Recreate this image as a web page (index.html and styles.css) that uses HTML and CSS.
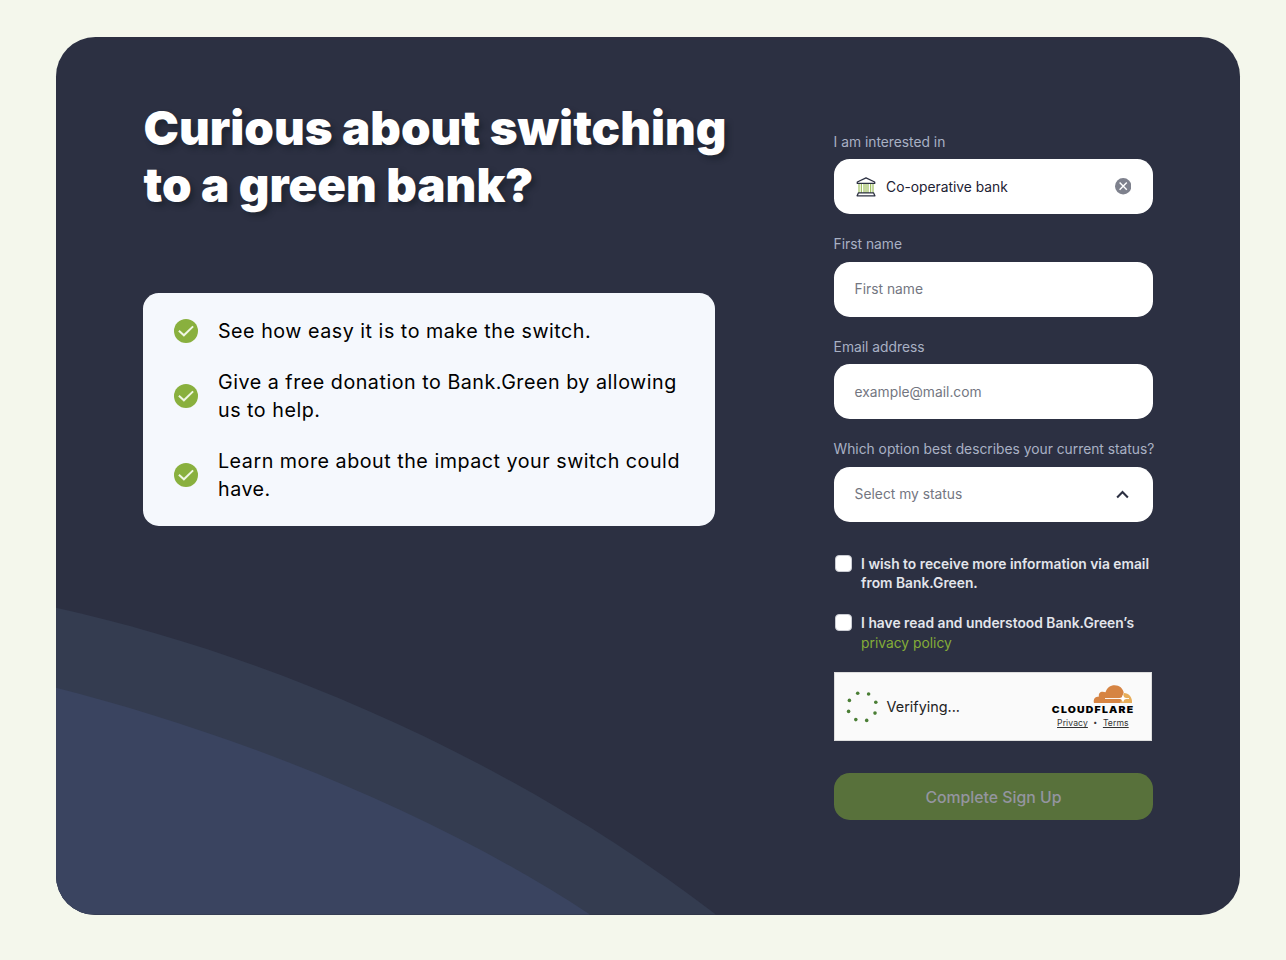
FILE: index.html
```html
<!DOCTYPE html>
<html lang="en">
<head>
<meta charset="utf-8">
<title>Bank.Green – Switch</title>
<link rel="stylesheet" href="styles.css">
</head>
<body>
<main class="panel">
  <svg class="waves" viewBox="0 0 1184 878" preserveAspectRatio="none" aria-hidden="true">
    <path fill="#343c50" d="M0 571C230 622 470 732 660 878H0Z"/>
    <path fill="#3a4460" d="M0 651C170 694 375 773 534 878H0Z"/>
  </svg>
  <section class="intro">
    <h1 class="title">Curious about switching<br>to a green bank?</h1>
    <ul class="benefits">
      <li class="benefit"><svg class="tick" viewBox="0 0 24 24"><circle cx="12" cy="12" r="12" fill="#89b03e"/><path d="M4.9 11.7l5 4.6 9.2-8.9" fill="none" stroke="#f0f7e4" stroke-width="2"/></svg><span class="copy">See how easy it is to make the switch.</span></li>
      <li class="benefit"><svg class="tick" viewBox="0 0 24 24"><circle cx="12" cy="12" r="12" fill="#89b03e"/><path d="M4.9 11.7l5 4.6 9.2-8.9" fill="none" stroke="#f0f7e4" stroke-width="2"/></svg><span class="copy">Give a free donation to Bank.Green by allowing<br>us to help.</span></li>
      <li class="benefit"><svg class="tick" viewBox="0 0 24 24"><circle cx="12" cy="12" r="12" fill="#89b03e"/><path d="M4.9 11.7l5 4.6 9.2-8.9" fill="none" stroke="#f0f7e4" stroke-width="2"/></svg><span class="copy">Learn more about the impact your switch could<br>have.</span></li>
    </ul>
  </section>
  <form class="form">
    <div class="field">
      <label class="label">I am interested in</label>
      <div class="control chosen">
        <svg class="bank" viewBox="0 0 20 20" fill="none" stroke="#2c3042" stroke-width="1.3" stroke-linejoin="round">
          <path stroke="#89b03e" stroke-width="1" d="M3 7v9M5.3 7v9M8 7v9M10 7v9M12 7v9M14.7 7v9M17 7v9"/>
          <path d="M1.3 5 10 .9 18.7 5v1.4H1.3ZM2.5 15.8h15L18.9 18.8H1.1Z"/>
        </svg>
        <span class="grow">Co-operative bank</span>
        <svg class="clear" viewBox="0 0 16 16"><circle cx="8" cy="8" r="8" fill="#7e818d"/><path d="M4.5 4.5l7 7m0-7l-7 7" stroke="#fff" stroke-width="1.4"/></svg>
      </div>
    </div>
    <div class="field"><label class="label">First name</label><div class="control">First name</div></div>
    <div class="field"><label class="label">Email address</label><div class="control">example@mail.com</div></div>
    <div class="field"><label class="label">Which option best describes your current status?</label>
      <div class="control"><span class="grow">Select my status</span><svg class="chevron" viewBox="0 0 12 8"><path d="M1 7l5-5.2L11 7" fill="none" stroke="#2c3042" stroke-width="1.9"/></svg></div>
    </div>
    <div class="checks">
      <div class="check"><span class="box"></span><span>I wish to receive more information via email<br>from Bank.Green.</span></div>
      <div class="check"><span class="box"></span><span>I have read and understood Bank.Green’s<br><a class="policy">privacy policy</a></span></div>
    </div>
    <div class="turnstile">
      <svg class="spinner" viewBox="0 0 32 32" fill="#4a7e35"><circle cx="11.7" cy="2.2" r="1.8"/><circle cx="22.6" cy="3" r="1.8"/><circle cx="29.8" cy="11.2" r="1.8"/><circle cx="29" cy="22.1" r="1.8"/><circle cx="20.7" cy="29.4" r="1.8"/><circle cx="9.8" cy="28.6" r="1.8"/><circle cx="2.6" cy="20.4" r="1.8"/><circle cx="3.4" cy="9.4" r="1.8"/></svg>
      <span class="verifying">Verifying...</span>
      <div class="brand">
        <svg class="cloud" viewBox="0 0 40 18"><path fill="#d68443" d="M1 18C0 14 2 11.5 6 11.4 5 8 8 5.5 12.5 7.2 14 2.7 17.3.2 21.6.2c4.9 0 8.3 3.2 9.1 7.3L27.5 18Z"/><path fill="#e7ad59" d="M27 18l4-10c4.5 0 8.5 4 8 10Z"/><path d="M12 13.5h16M28 13.5h8" stroke="#fff" stroke-width=".9"/><path fill="#fff" d="M30 9.5l1.2 2.8 3 1.2-3 1.2L30 17.5l-1.2-2.8-3-1.2 3-1.2Z"/></svg>
        <span class="wordmark">CLOUDFLARE</span>
        <span class="legal"><u>Privacy</u><span class="dot">•</span><u>Terms</u></span>
      </div>
    </div>
    <button class="submit" type="button">Complete Sign Up</button>
  </form>
</main>
</body>
</html>
```
FILE: styles.css
```css
* { box-sizing: border-box; }
body { margin: 0; background: #f4f7ec; font-family: Inter, "Liberation Sans", sans-serif; }
.panel { position: relative; width: 1183.7px; height: 877.5px; margin: 37px 0 0 56.3px; border-radius: 39.4px; overflow: hidden; background: #2c3042; display: flex; align-items: flex-start; padding: 61.5px 86.7px 0; justify-content: space-between; }
.waves { position: absolute; inset: 0; width: 100%; height: 100%; }
.intro { position: relative; width: 600px; }
.title { margin: 0; padding-left: .6px; font-size: 47.4px; font-weight: 900; line-height: 57.2px; color: #fff; text-shadow: 4px 4px 5px rgba(20, 28, 38, .5); white-space: nowrap; }
.benefits { list-style: none; margin: 80.3px 0 0; padding: 24px 31.4px; width: 572.5px; height: 233px; border-radius: 15.8px; background: #f5f8fd; display: flex; flex-direction: column; gap: 23.7px; }
.benefit { display: flex; align-items: center; gap: 19.6px; font-size: 19.7px; line-height: 27.6px; letter-spacing: .52px; color: #000; white-space: nowrap; }
.copy { padding-top: 1px; margin-bottom: -1px; }
.tick { width: 24px; height: 24px; flex: none; }
.form { position: relative; width: 319.7px; display: flex; flex-direction: column; padding-top: 33px; }
.field { height: 102.6px; }
.label { display: block; height: 27.6px; font-size: 13.8px; line-height: 20px; color: #a9b1c4; white-space: nowrap; }
.control { height: 55.2px; border-radius: 15.8px; background: #fff; display: flex; align-items: center; padding: 0 21px; font-size: 13.8px; color: #737681; }
.chosen { color: #1d2133; padding-left: 22.5px; }
.grow { flex: 1; }
.bank { width: 20px; height: 20px; margin-right: 10px; }
.clear { width: 16.4px; height: 16.4px; margin-right: 1.3px; }
.chevron { width: 13px; height: 8.6px; margin-right: 3px; }
.checks { display: flex; flex-direction: column; gap: 19.7px; margin-top: 12.9px; }
.check { display: flex; gap: 9px; padding-left: 1.5px; font-size: 13.8px; font-weight: 600; line-height: 19.7px; color: #e3e5eb; white-space: nowrap; }
.box { width: 17px; height: 17px; margin-top: .5px; border: 1px solid #c9cbd2; border-radius: 4px; background: #fff; flex: none; }
.policy { color: #84ac38; font-weight: 400; }
.turnstile { width: 318.6px; height: 69.5px; margin-top: 18.6px; border: 1px solid #ddd; background: #fafafa; display: flex; align-items: center; padding: 0 18px 0 11px; }
.spinner { width: 32px; height: 32px; margin-right: 9px; }
.verifying { flex: 1; font-size: 14.4px; color: #232323; }
.brand { display: flex; flex-direction: column; align-items: flex-end; }
.cloud { width: 40px; height: 18px; margin-top: 1px; }
.wordmark { font-size: 9.2px; line-height: 12px; font-weight: 900; letter-spacing: 1.05px; color: #000; margin-top: 1px; margin-right: -1.2px; transform: scaleX(1.14); transform-origin: right; }
.legal { display: flex; align-items: center; font-size: 8.6px; line-height: 12px; margin: 1.5px 4.5px 0 0; color: #333; letter-spacing: .1px; }
.dot { width: 15px; text-align: center; font-size: 7px; }
.submit { height: 47.5px; width: 319.7px; margin-top: 31.5px; padding-top: 2px; border: 0; border-radius: 15.8px; background: #58713b; color: #9495a0; font: 500 15.8px Inter, sans-serif; }
```
